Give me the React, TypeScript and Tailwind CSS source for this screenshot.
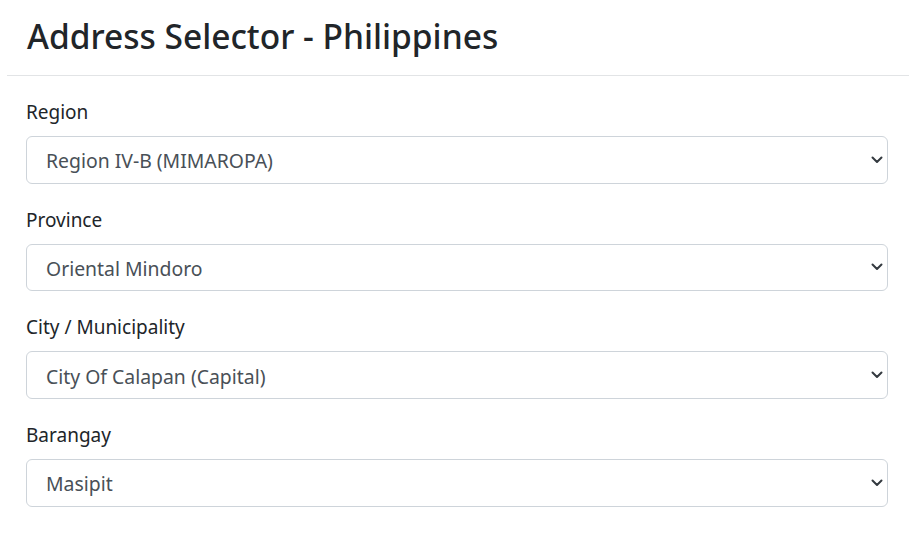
import { useState } from 'react';

type Field = {
  label: string;
  options: string[];
};

const fields: Field[] = [
  { label: 'Region', options: ['Region IV-B (MIMAROPA)'] },
  { label: 'Province', options: ['Oriental Mindoro'] },
  { label: 'City / Municipality', options: ['City Of Calapan (Capital)'] },
  { label: 'Barangay', options: ['Masipit'] },
];

function Chevron() {
  return (
    <svg
      className="pointer-events-none absolute right-[5px] top-1/2 -translate-y-1/2"
      width="12"
      height="8"
      viewBox="0 0 12 8"
      fill="none"
    >
      <path
        d="M1.5 1.5l4.5 4.5 4.5-4.5"
        stroke="#343a40"
        strokeWidth="2"
        strokeLinecap="round"
        strokeLinejoin="round"
      />
    </svg>
  );
}

function SelectField({ label, options }: Field) {
  const [value, setValue] = useState(options[0]);
  return (
    <div>
      <label className="mb-[10px] block text-[19px] leading-[28px] text-[#212529]">{label}</label>
      <div className="relative">
        <select
          value={value}
          onChange={(e) => setValue(e.target.value)}
          className="block h-[47.5px] w-full appearance-none rounded-[6px] border border-[#ced4da] bg-white pl-[19px] pr-10 pt-[2px] text-[19.4px] text-[#495057] outline-none"
        >
          {options.map((o) => (
            <option key={o}>{o}</option>
          ))}
        </select>
        <Chevron />
      </div>
    </div>
  );
}

export default function App() {
  return (
    <div className="min-h-[549px] bg-white font-['Noto_Sans',sans-serif]">
      <div className="pl-[27px] pt-[14px]">
        <h1 className="text-[33.5px] font-medium leading-[44px] text-[#212529]">
          Address Selector - Philippines
        </h1>
      </div>
      <hr className="ml-[7px] mt-[17px] border-t border-[#e2e4e6]" />
      <div className="flex flex-col gap-[22.2px] pl-[26px] pr-[21px] pt-[22px]">
        {fields.map((f) => (
          <SelectField key={f.label} {...f} />
        ))}
      </div>
    </div>
  );
}
